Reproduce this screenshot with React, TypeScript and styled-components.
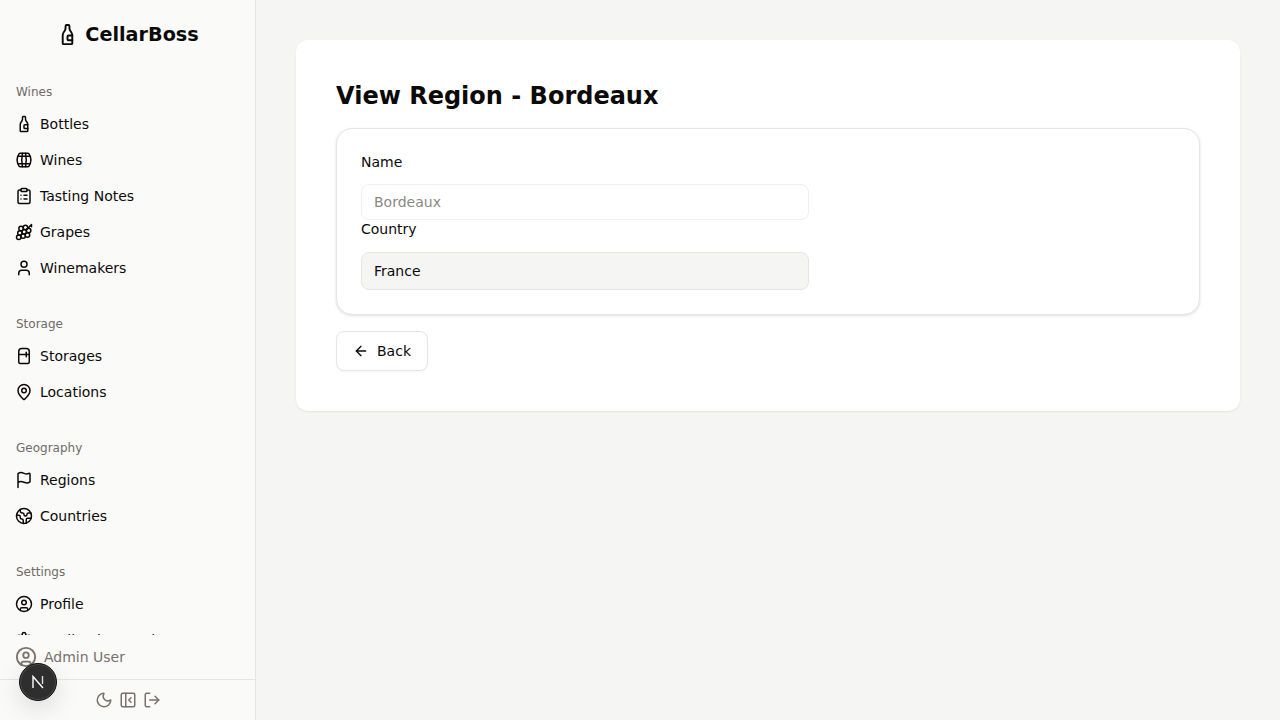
import React from "react";
import styled, { createGlobalStyle } from "styled-components";
import { TbBarrel } from "react-icons/tb";
import * as L from "lucide-react";
import {
  BottleWine, ClipboardList, Grape, User, Refrigerator, MapPin, Flag, Earth, CircleUser, Settings,
  Moon, PanelLeftClose, LogOut, ArrowLeft,
} from "lucide-react";

const BarrelIcon: any = (L as any).Barrel ?? TbBarrel;

const Global = createGlobalStyle`
  html, body { margin: 0; padding: 0; height: 100%; overflow: hidden; }
  body { font-family: "DejaVu Sans", sans-serif; background: #f5f5f4; color: #0c0a09; }
  * { box-sizing: border-box; }
`;
const Layout = styled.div`display: flex; width: 1280px; height: 720px;`;
const Sidebar = styled.aside`
  width: 256px; height: 720px; flex: none; display: flex; flex-direction: column;
  background: #fafaf9; border-right: 1px solid #e7e5e4;
`;
const Brand = styled.div`
  height: 68px; flex: none; display: flex; align-items: center; justify-content: center; gap: 6px;
  font-size: 19.2px; font-weight: 700; color: #0c0a09;
`;
const Nav = styled.nav`
  height: 567px; flex: none; overflow: hidden; padding-top: 14px;
  display: flex; flex-direction: column; gap: 28px;
`;
const Group = styled.div`display: flex; flex-direction: column;`;
const GroupTitle = styled.div`
  height: 20px; padding-left: 16px; font-size: 12px; line-height: 20px; color: #6f6a66; margin-bottom: 4px;
`;
const Item = styled.a`
  height: 36px; flex: none; display: flex; align-items: center; gap: 8px; padding-left: 16px;
  font-size: 14px; color: #0c0a09;
`;
const IconSlot = styled.span`
  width: 16px; height: 16px; flex: none; display: flex; align-items: center; justify-content: center;
  svg { flex: none; }
`;
const UserRow = styled.div`
  height: 44px; flex: none; display: flex; align-items: center; gap: 7px; padding: 0 15px 1px;
  font-size: 14px; color: #78716c;
`;
const Footer = styled.div`
  height: 41px; flex: none; border-top: 1px solid #e7e5e4; display: flex; align-items: center;
  justify-content: center; gap: 8px; color: #78716c;
`;
const DevBadge = styled.div`
  position: absolute; left: 19px; top: 663px; width: 38px; height: 38px; border-radius: 50%;
  background: #2e2e2e; border: 1px solid #111; box-shadow: 0 0 0 1px #4a4a4a inset, 0 8px 24px rgba(0,0,0,.12);
  color: #fff; display: flex; align-items: center; justify-content: center;
`;
const Main = styled.main`flex: 1; padding: 40px; min-width: 0;`;
const Card = styled.section`
  background: #fff; border-radius: 12px; padding: 40px; box-shadow: 0 1px 2px rgba(0,0,0,.08);
  display: flex; flex-direction: column; align-items: stretch;
`;
const Title = styled.h1`
  margin: 0 0 16px; padding-top: 1px; font-size: 24px; line-height: 31px; font-weight: 700; color: #0c0a09;
`;
const Panel = styled.div`
  height: 187px; border: 1px solid #e7e5e4; border-radius: 16px; background: #fff; padding: 23px 24px;
  box-shadow: 0 1px 3px rgba(0,0,0,.12); margin-bottom: 16px;
  display: flex; flex-direction: column; align-items: flex-start;
`;
const Label = styled.label<{ $tight?: boolean }>`
  display: block; font-size: 14px; height: 32px; line-height: ${p => (p.$tight ? 18 : 20)}px; color: #0c0a09;
`;
const Field = styled.div<{ $filled?: boolean }>`
  width: 448px; height: ${p => (p.$filled ? 38 : 36)}px; border-radius: 8px; padding: 0 12px;
  border: 1px solid ${p => (p.$filled ? "#e7e5e4" : "#f0efee")};
  background: ${p => (p.$filled ? "#f5f5f4" : "#fff")};
  color: ${p => (p.$filled ? "#0c0a09" : "#8c8886")};
  font-size: 14px; display: flex; align-items: center;
`;
const BackButton = styled.button`
  align-self: flex-start; height: 40px; width: 92px; border: 1px solid #e7e5e4; border-radius: 8px; background: #fff;
  display: flex; align-items: center; justify-content: center; gap: 8px;
  font: 14px "DejaVu Sans", sans-serif; color: #0c0a09; box-shadow: 0 1px 2px rgba(0,0,0,.04);
`;

const NavIcon = ({ of: I }: { of: any }) => <IconSlot><I size={18} /></IconSlot>;

const groups: { title: string; items: [string, any][] }[] = [
  { title: "Wines", items: [["Bottles", BottleWine], ["Wines", BarrelIcon], ["Tasting Notes", ClipboardList], ["Grapes", Grape], ["Winemakers", User]] },
  { title: "Storage", items: [["Storages", Refrigerator], ["Locations", MapPin]] },
  { title: "Geography", items: [["Regions", Flag], ["Countries", Earth]] },
  { title: "Settings", items: [["Profile", CircleUser], ["Application Settings", Settings]] },
];

export default function App() {
  return (
    <Layout>
      <Global />
      <Sidebar>
        <Brand><BottleWine size={23} />CellarBoss</Brand>
        <Nav>
          {groups.map(g => (
            <Group key={g.title}>
              <GroupTitle>{g.title}</GroupTitle>
              {g.items.map(([label, icon]) => <Item key={label}><NavIcon of={icon} />{label}</Item>)}
            </Group>
          ))}
        </Nav>
        <UserRow><CircleUser size={22} />Admin User</UserRow>
        <Footer><NavIcon of={Moon} /><NavIcon of={PanelLeftClose} /><NavIcon of={LogOut} /></Footer>
      </Sidebar>
      <Main>
        <Card>
          <Title>View Region - Bordeaux</Title>
          <Panel>
            <Label>Name</Label>
            <Field>Bordeaux</Field>
            <Label $tight>Country</Label>
            <Field $filled>France</Field>
          </Panel>
          <BackButton><ArrowLeft size={16} />Back</BackButton>
        </Card>
      </Main>
      <DevBadge>
        <svg width="14" height="14" viewBox="0 0 14 14" fill="none" aria-hidden="true">
          <path d="M2 13V1.5L12 13" stroke="#fff" strokeWidth="1.4" />
          <path d="M11.5 1v8" stroke="#ddd" strokeWidth="1.4" />
        </svg>
      </DevBadge>
    </Layout>
  );
}
